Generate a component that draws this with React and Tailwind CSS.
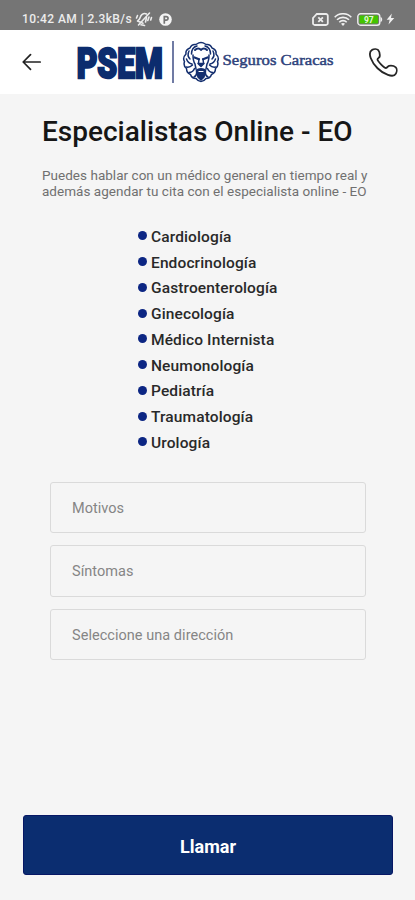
const specialties = [
  'Cardiología',
  'Endocrinología',
  'Gastroenterología',
  'Ginecología',
  'Médico Internista',
  'Neumonología',
  'Pediatría',
  'Traumatología',
  'Urología',
];

const fields = ['Motivos', 'Síntomas', 'Seleccione una dirección'];

function StatusBar() {
  return (
    <div className="flex h-[30px] shrink-0 items-center bg-[#757575] pt-[8px] pr-[20px] pl-[22px] text-[#ececec]">
      <span className="text-[12px] leading-[14px] font-medium tracking-[0.420px] whitespace-nowrap">10:42 AM | 2.3kB/s</span>
      <svg className="ml-[3px]" width="18" height="16" viewBox="0 0 18 16" fill="none" stroke="currentColor" strokeWidth="1.6" strokeLinecap="round" strokeLinejoin="round">
        <path d="M2.500 10l2-2 1.300-3C7 2.800 9.500 1.800 11.500 3M2.500 10l5.500 2.300M11.500 6.500l-1 4.500M6 13.800l3.500.7" />
        <path d="M3.500 14L14.500 2M14 6l-1.200 3.500M16.500 6.500l-.8 2.500M2.500 4.500L1.500 7" />
      </svg>
      <svg className="ml-[6px]" width="13" height="13" viewBox="0 0 13 13">
        <circle cx="6.500" cy="6.500" r="6.300" fill="#f4f4f4" />
        <path d="M5.300 10.800V3.600h2a1.700 1.700 0 010 3.500H5.700" fill="none" stroke="#757575" strokeWidth="1.700" />
      </svg>
      <div className="ml-auto flex items-center">
        <svg width="17" height="13" viewBox="0 0 17 13" fill="none" stroke="currentColor" strokeWidth="1.800">
          <path d="M4.800 1H14a1.800 1.800 0 011.800 1.800v7.400A1.800 1.800 0 0114 12H2.800A1.800 1.800 0 011 10.200V5z" />
          <path d="M6.300 4.300l4.600 4.600M10.900 4.300L6.300 8.900" />
        </svg>
        <svg className="ml-[5px]" width="18" height="13" viewBox="0 0 18 13" fill="none" stroke="#f0f0f0" strokeWidth="1.600">
          <path d="M.7 4.300C5.200-.4 12.800-.4 17.300 4.300M3 6.800c3.300-3.300 8.700-3.300 12 0M5.300 9.200c2-2.100 5.400-2.100 7.400 0" />
          <path d="M7 10.700c1.200-1.100 2.800-1.100 4 0l-2 2.200z" fill="#f0f0f0" stroke="none" />
        </svg>
        <svg className="ml-[5px]" width="26" height="13" viewBox="0 0 26 13">
          <rect x=".8" y=".8" width="22" height="11.400" rx="2.800" fill="none" stroke="#eee" strokeWidth="1.400" />
          <rect x="2.500" y="2.500" width="18.600" height="8" rx="1" fill="#43c400" />
          <path d="M23.500 4c2.300.6 2.300 4.400 0 5z" fill="#eee" />
          <text x="11.800" y="9.600" textAnchor="middle" fontFamily="Roboto, sans-serif" fontSize="8.500" fontWeight="700" fill="#e5f8dc">97</text>
        </svg>
        <svg className="ml-[3px]" width="9" height="12" viewBox="0 0 9 12" fill="#f0f0f0">
          <path d="M5.800.5L.7 6.700h3L2.500 11.500 8.300 5H5z" />
        </svg>
      </div>
    </div>
  );
}

function Lion() {
  return (
    <svg width="38" height="42" viewBox="0 0 38 42" fill="none" stroke="#142f6f" strokeWidth="1.500" strokeLinecap="round" strokeLinejoin="round">
      <path d="M19 1.500c-3 0-4 1.500-5 2-3-.5-5 1-6 3.500-3 1-4.500 3-4 6-2.500 2.500-3 5-1.500 7.500-1 3 0 5.500 2 7 0 3 1.500 5 4 6 1 3 3 4 5.500 4 1.500 2 3 3 5 3s3.500-1 5-3c2.500 0 4.500-1 5.500-4 2.500-1 4-3 4-6 2-1.500 3-4 2-7 1.500-2.500 1-5-1.500-7.500.5-3-1-5-4-6-1-2.500-3-4-6-3.500-1-.5-2-2-5-2z" />
      <path d="M15 5c-4 1-5.500 4-5.500 8M23 5c4 1 5.500 4 5.500 8M7 10c-1.500 3-1 6 1 8M31 10c1.500 3 1 6-1 8M4.500 18c1 3 3 4.500 5.500 5M33.500 18c-1 3-3 4.500-5.500 5M4.500 26c2.500.5 4.500-.5 6-2M33.500 26c-2.500.5-4.500-.5-6-2M7 31.500c2.500 0 4.500-1.500 5.500-4M31 31.500c-2.500 0-4.500-1.500-5.500-4M12 36c2-1 3-3 2.500-6M26 36c-2-1-3-3-2.500-6" />
      <path d="M13 9c2-2 4.500-2 6 0 1.500-2 4-2 6 0" strokeWidth="2" />
      <path d="M11 14c0 4 0 6 2 9l1 5M27 14c0 4 0 6-2 9l-1 5M17 18l-.5 4M21 18l.5 4" />
      <path d="M12.500 16.500l4.500 1.700M25.500 16.500L21 18.200" strokeWidth="2.200" />
      <path d="M16 22.500h6l-3 3zM14.500 29c2-1.800 7-1.800 9 0l-1.500 7-3 3-3-3z" fill="#142f6f" />
      <path d="M17 30.500h4" stroke="#fff" strokeWidth="1.200" />
    </svg>
  );
}

function Header() {
  return (
    <header className="flex h-[64px] shrink-0 items-center bg-white pl-[22px]">
      <svg width="20" height="18" viewBox="0 0 20 18" fill="none" stroke="#222" strokeWidth="1.700" strokeLinecap="round" strokeLinejoin="round">
        <path d="M18.200 9H1.500M8.500 1.700L1.200 9l7.300 7.300" />
      </svg>
      <svg className="ml-[34px] overflow-visible" width="90" height="60" viewBox="0 0 90 60">
        <text x="0.700" y="45.500" textLength="86" lengthAdjust="spacingAndGlyphs" fontFamily="Roboto, sans-serif" fontSize="42" fontWeight="900" fill="#0c2c6e" stroke="#0c2c6e" strokeWidth="2.400">PSEM</text>
      </svg>
      <div className="ml-[6px] h-[42px] w-[2px] bg-[#707ba4]" />
      <div className="ml-[8px]">
        <Lion />
      </div>
      <svg className="ml-[2px]" width="112" height="24" viewBox="0 0 112 24">
        <text x="0.500" y="15" textLength="111" lengthAdjust="spacingAndGlyphs" fontFamily="Liberation Serif, serif" fontSize="14" fontWeight="400" fill="#2f437c" stroke="#2f437c" strokeWidth=".45">Seguros Caracas</text>
      </svg>
      <svg className="ml-[35px]" width="29" height="29" viewBox="0 0 29 29" fill="none" stroke="#262626" strokeWidth="1.800" strokeLinejoin="round">
        <path d="M3 1.900C5 .8 8 .8 9.300 2.200c1.400 1.700 1.700 4 1.400 6.300-.2 1.300-2.100 1.600-2.200 3 0 1.500 6.500 8.400 8.500 8.500 1.400 0 1.700-1.900 3-2.200 2.500-.4 5-.1 6.800 1.500 1.300 1.300 1.100 4.500.1 6.400-1.100 2-4.400 2.500-8 1.200C11.600 24.500 4.300 17.200 1.700 10 .5 6.500.8 3.200 3 1.900z" />
      </svg>
    </header>
  );
}

export default function App() {
  return (
    <div className="flex h-[900px] w-[415px] flex-col overflow-hidden bg-[#f5f5f5] font-[Roboto,sans-serif]">
      <StatusBar />
      <Header />
      <main className="flex flex-1 flex-col">
        <h1 className="mt-[20px] ml-[42px] text-[28px] leading-[36px] font-medium whitespace-nowrap text-[#161616]">
          Especialistas Online - EO
        </h1>
        <p className="mt-[17px] ml-[42px] text-[13.500px] leading-[16px] tracking-[0.030px] whitespace-nowrap text-[#707070]">
          Puedes hablar con un médico general en tiempo real y
          <br />
          además agendar tu cita con el especialista online - EO
        </p>
        <ul className="mt-[25px] ml-[138px]">
          {specialties.map((name) => (
            <li key={name} className="flex h-[25.750px] items-center">
              <span className="-mt-[2px] mr-[4px] size-[9px] rounded-full bg-[#0c2683]" />
              <span className="text-[15.500px] leading-[20px] font-medium tracking-[0.120px] whitespace-nowrap text-[#292929]">{name}</span>
            </li>
          ))}
        </ul>
        <div className="mt-[26px] ml-[50px] flex w-[316px] flex-col gap-[12px]">
          {fields.map((label) => (
            <div key={label} className="flex h-[51.500px] items-center rounded-[3px] border border-[#dadada] pt-[2px] pl-[21px] text-[14.500px] tracking-[0.040px] text-[#858585]">
              {label}
            </div>
          ))}
        </div>
        <button className="mt-auto mb-[25.500px] ml-[23px] h-[59.500px] w-[370px] rounded-[3px] border border-[#071765] bg-[#0b2d70] pt-[3px] text-[18px] font-bold text-white">
          Llamar
        </button>
      </main>
    </div>
  );
}
